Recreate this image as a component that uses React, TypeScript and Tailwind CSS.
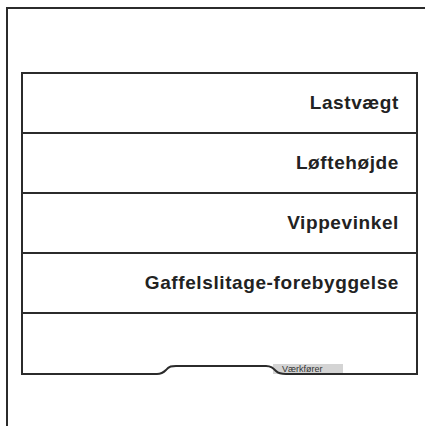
import React from "react";

const rows = ["Lastvægt", "Løftehøjde", "Vippevinkel", "Gaffelslitage-forebyggelse"];

export default function App() {
  return (
    <div className="w-[425px] h-[426px] overflow-hidden bg-white" style={{ fontFamily: '"Liberation Sans", Arial, sans-serif' }}>
      <div className="ml-[6px] mt-[7px] w-[460px] h-[460px] border-l-2 border-t-2 border-[#2b2b2b] pt-[63px] pl-[13px]">
        <div className="relative w-[397px] border-x-2 border-t-2 border-[#2b2b2b]">
          {rows.map((r) => (
            <div key={r} className="h-[60px] border-b-2 border-[#2b2b2b] flex items-center justify-end pr-[17px]">
              <span className="text-[19px] font-bold text-[#222] tracking-[0.6px]">{r}</span>
            </div>
          ))}
          <div className="h-[60px]" />
          <div className="absolute left-[250px] top-[290px] h-[10px] w-[70px] bg-[#d4d4d4] flex items-center pl-[9px]">
            <span className="text-[9px] leading-none text-[#333]">Værkfører</span>
          </div>
          <svg className="absolute left-[-2px] top-[290px] overflow-visible" width="397" height="12" viewBox="0 0 397 12">
            <path
              d="M0 10 H136 C141 10 143 8 145 6 C148 2 151 2 155 2 H245 C250 2 252 4 255 7 C258 10 261 10 265 10 H397"
              fill="none"
              stroke="#2b2b2b"
              strokeWidth="2"
            />
          </svg>
        </div>
      </div>
    </div>
  );
}
